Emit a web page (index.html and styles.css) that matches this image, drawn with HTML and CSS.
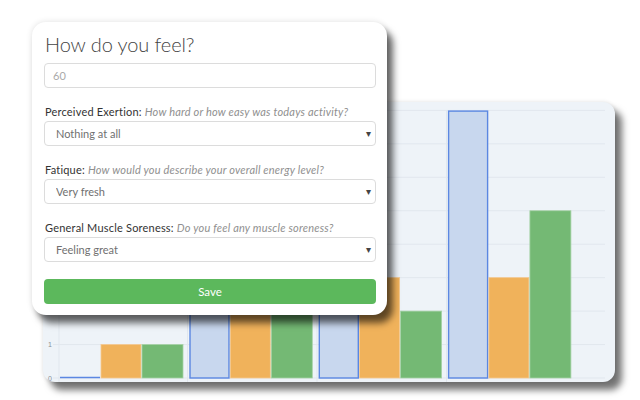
FILE: index.html
```html
<!DOCTYPE html>
<html>
<head>
<meta charset="utf-8">
<link rel="stylesheet" href="styles.css">
</head>
<body>
<div class="stage">
  <div class="chart-card">
    <svg class="chart" width="572" height="280" viewBox="0 0 572 280">
      <g class="grid">
        <line x1="16" y1="8.4" x2="562" y2="8.4"/>
        <line x1="16" y1="41.85" x2="562" y2="41.85"/>
        <line x1="16" y1="75.3" x2="562" y2="75.3"/>
        <line x1="16" y1="108.75" x2="562" y2="108.75"/>
        <line x1="16" y1="142.2" x2="562" y2="142.2"/>
        <line x1="16" y1="175.65" x2="562" y2="175.65"/>
        <line x1="16" y1="209.1" x2="562" y2="209.1"/>
        <line x1="10" y1="242.55" x2="562" y2="242.55"/>
        <line x1="10" y1="276" x2="562" y2="276"/>
        <line x1="16" y1="8" x2="16" y2="280"/>
        <line x1="144.5" y1="8" x2="144.5" y2="280"/>
        <line x1="274" y1="8" x2="274" y2="280"/>
        <line x1="403.5" y1="8" x2="403.5" y2="280"/>
      </g>
      <g class="ticks">
        <text x="9" y="278.5">0</text>
        <text x="9" y="245">1</text>
      </g>
      <g class="bars">
        <line class="blue-line" x1="17" y1="275.5" x2="57" y2="275.5"/>
        <rect class="orange" x="58" y="242.55" width="40" height="33.45"/>
        <rect class="green" x="99" y="242.55" width="41" height="33.45"/>

        <rect class="blue" x="147" y="109.5" width="39" height="166.5"/>
        <rect class="orange" x="187.3" y="142.2" width="40" height="133.8"/>
        <rect class="green" x="228.3" y="142.2" width="41" height="133.8"/>

        <rect class="blue" x="276.3" y="76" width="39" height="200"/>
        <rect class="orange" x="316.6" y="175.65" width="40" height="100.35"/>
        <rect class="green" x="357.6" y="209.1" width="41" height="66.9"/>

        <rect class="blue" x="405.6" y="9.1" width="39" height="266.9"/>
        <rect class="orange" x="445.9" y="175.65" width="40" height="100.35"/>
        <rect class="green" x="486.9" y="108.75" width="41" height="167.25"/>
      </g>
    </svg>
  </div>

  <form class="feel-card">
    <h1 class="title">How do you feel?</h1>
    <input class="field" type="text" value="60">

    <div class="group">
      <label class="label">Perceived Exertion: <em>How hard or how easy was todays activity?</em></label>
      <div class="select-wrap">
        <select class="field select"><option>Nothing at all</option></select>
      </div>
    </div>

    <div class="group">
      <label class="label">Fatique: <em>How would you describe your overall energy level?</em></label>
      <div class="select-wrap">
        <select class="field select"><option>Very fresh</option></select>
      </div>
    </div>

    <div class="group">
      <label class="label">General Muscle Soreness: <em>Do you feel any muscle soreness?</em></label>
      <div class="select-wrap">
        <select class="field select"><option>Feeling great</option></select>
      </div>
    </div>

    <button class="save" type="button">Save</button>
  </form>
</div>
</body>
</html>
```

FILE: styles.css
```css
* { box-sizing: border-box; }

html, body {
  margin: 0;
  padding: 0;
  background: #ffffff;
  font-family: "Lato", "Open Sans", sans-serif;
}

.stage {
  position: relative;
  width: 640px;
  height: 400px;
  overflow: hidden;
  padding-top: 102px;
  padding-left: 43px;
}

.chart-card {
  width: 572px;
  height: 280px;
  background: #eef3f8;
  border-radius: 12px;
  box-shadow: 0 0 4px rgba(0,0,0,0.12), 7px 8px 7px rgba(0,0,0,0.55);
  overflow: hidden;
}

.chart { display: block; }

.grid line {
  stroke: #e1e7ee;
  stroke-width: 1;
}

.ticks text {
  font-family: "Liberation Sans", sans-serif;
  font-size: 7px;
  fill: #8a8f96;
  text-anchor: end;
}

.blue {
  fill: #c8d7ee;
  stroke: #5b87e2;
  stroke-width: 1.4;
}

.blue-line {
  stroke: #5b87e2;
  stroke-width: 1.4;
}

.orange {
  fill: #f0b25b;
  stroke: #f4c890;
  stroke-width: 0.8;
}

.green {
  fill: #74b974;
  stroke: #a5d2a5;
  stroke-width: 0.8;
}

.feel-card {
  position: absolute;
  left: 32px;
  top: 22px;
  width: 355px;
  height: 293px;
  margin: 0;
  padding: 8px 11px 11px 12px;
  background: #ffffff;
  border-radius: 14px;
  box-shadow: 0 0 6px rgba(0,0,0,0.12), 6px 8px 7px rgba(0,0,0,0.6);
  display: flex;
  flex-direction: column;
}

.title {
  margin: 0 0 5px 1px;
  font-family: "Lato Light", "Lato", sans-serif;
  font-size: 20px;
  line-height: 28px;
  font-weight: 300;
  letter-spacing: -0.1px;
  color: #444;
}

.field {
  display: block;
  width: 100%;
  height: 25px;
  margin: 0;
  border: 1px solid #dcdcdc;
  border-radius: 4px;
  background: #fff;
  font-family: "Lato", "Open Sans", sans-serif;
  font-size: 11px;
  color: #aaa;
  padding: 0 8px;
  outline: none;
}

.group {
  margin-top: 16px;
  display: flex;
  flex-direction: column;
  gap: 2px;
}

.label {
  display: block;
  font-size: 11px;
  line-height: 15px;
  letter-spacing: 0.2px;
  color: #333;
  padding-left: 1px;
  white-space: nowrap;
}

.label em {
  color: #8f8f8f;
  font-style: italic;
}

.select-wrap {
  position: relative;
}

.select {
  -webkit-appearance: none;
  appearance: none;
  color: #707070;
  padding-left: 11px;
}

.select-wrap::after {
  content: "▾";
  position: absolute;
  right: 5px;
  top: 5px;
  font-size: 10px;
  line-height: 14px;
  color: #444;
  pointer-events: none;
}

.save {
  margin-top: 17px;
  width: 100%;
  height: 25px;
  border: none;
  border-radius: 4px;
  background: #5cb85c;
  color: #fff;
  font-family: "Lato", "Open Sans", sans-serif;
  font-size: 11.5px;
  cursor: pointer;
}
```
